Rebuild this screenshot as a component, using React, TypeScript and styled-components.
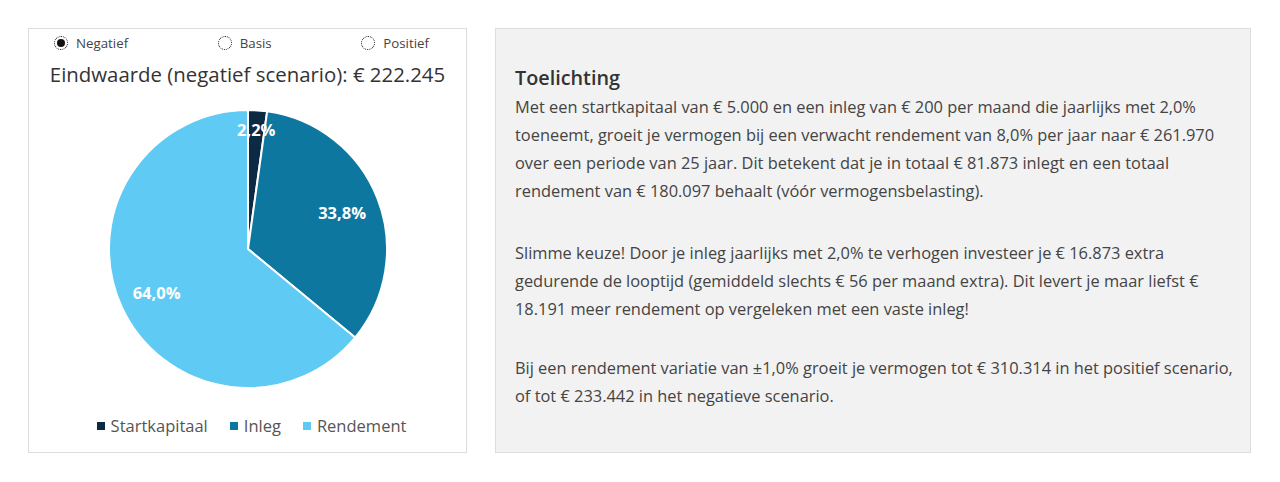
import React from 'react';
import styled, { createGlobalStyle } from 'styled-components';

const GlobalStyle = createGlobalStyle`
  html, body {
    margin: 0;
    padding: 0;
    background: #ffffff;
  }
  body {
    font-family: 'Open Sans', 'Noto Sans', sans-serif;
    color: #333;
  }
`;

type Slice = { label: string; value: number; color: string; labelRadius: number };

const SLICES: Slice[] = [
  { label: 'Startkapitaal', value: 2.2, color: '#0d2a45', labelRadius: 120 },
  { label: 'Inleg', value: 33.8, color: '#0e77a0', labelRadius: 101 },
  { label: 'Rendement', value: 64.0, color: '#5fcaf3', labelRadius: 101 },
];

const SCENARIOS = [
  { id: 'negatief', label: 'Negatief', checked: true },
  { id: 'basis', label: 'Basis', checked: false },
  { id: 'positief', label: 'Positief', checked: false },
];

const R = 139;
const C = 140;

const point = (angle: number, r: number) => {
  const a = (angle - 90) * (Math.PI / 180);
  return [C + r * Math.cos(a), C + r * Math.sin(a)];
};

const formatPct = (v: number) => `${v.toFixed(1).replace('.', ',')}%`;

const PieChart: React.FC = () => {
  let start = 0;
  const arcs = SLICES.map((s) => {
    const sweep = (s.value / 100) * 360;
    const end = start + sweep;
    const [x1, y1] = point(start, R);
    const [x2, y2] = point(end, R);
    const large = sweep > 180 ? 1 : 0;
    const d = `M ${C} ${C} L ${x1} ${y1} A ${R} ${R} 0 ${large} 1 ${x2} ${y2} Z`;
    const [lx, ly] = point(start + sweep / 2, s.labelRadius);
    start = end;
    return { ...s, d, lx, ly };
  });

  return (
    <svg width={280} height={280} viewBox="0 0 280 280">
      {arcs.map((a) => (
        <path key={a.label} d={a.d} fill={a.color} stroke="#fff" strokeWidth={2} strokeLinejoin="round" />
      ))}
      {arcs.map((a) => (
        <text
          key={`${a.label}-t`}
          x={a.lx}
          y={a.ly}
          fill="#fff"
          fontSize={16.5}
          fontWeight={700}
          textAnchor="middle"
          dominantBaseline="central"
          fontFamily="'Open Sans', sans-serif"
        >
          {formatPct(a.value)}
        </text>
      ))}
    </svg>
  );
};

const App: React.FC = () => {
  return (
    <>
      <GlobalStyle />
      <Page>
        <ChartCard>
          <RadioRow>
            {SCENARIOS.map((s) => (
              <RadioLabel key={s.id}>
                <RadioCircle $checked={s.checked} />
                {s.label}
              </RadioLabel>
            ))}
          </RadioRow>
          <ChartTitle>Eindwaarde (negatief scenario): € 222.245</ChartTitle>
          <PieWrap>
            <PieChart />
          </PieWrap>
          <Legend>
            {SLICES.map((s) => (
              <LegendItem key={s.label}>
                <LegendSwatch $color={s.color} />
                {s.label}
              </LegendItem>
            ))}
          </Legend>
        </ChartCard>

        <InfoPanel>
          <InfoTitle>Toelichting</InfoTitle>
          <Paragraph>
            Met een startkapitaal van € 5.000 en een inleg van € 200 per maand die jaarlijks met 2,0%
            <br />
            toeneemt, groeit je vermogen bij een verwacht rendement van 8,0% per jaar naar € 261.970
            <br />
            over een periode van 25 jaar. Dit betekent dat je in totaal € 81.873 inlegt en een totaal
            <br />
            rendement van € 180.097 behaalt (vóór vermogensbelasting).
          </Paragraph>
          <Paragraph $gap={34}>
            Slimme keuze! Door je inleg jaarlijks met 2,0% te verhogen investeer je € 16.873 extra
            <br />
            gedurende de looptijd (gemiddeld slechts € 56 per maand extra). Dit levert je maar liefst €
            <br />
            18.191 meer rendement op vergeleken met een vaste inleg!
          </Paragraph>
          <Paragraph $gap={31}>
            Bij een rendement variatie van ±1,0% groeit je vermogen tot € 310.314 in het positief scenario,
            <br />
            of tot € 233.442 in het negatieve scenario.
          </Paragraph>
        </InfoPanel>
      </Page>
    </>
  );
};

const Page = styled.div`
  display: grid;
  grid-template-columns: 439px 756px;
  gap: 28px;
  padding: 28px;
  align-items: start;
`;

const ChartCard = styled.div`
  box-sizing: border-box;
  height: 425px;
  border: 1px solid #dddddd;
  background: #fff;
  display: flex;
  flex-direction: column;
  align-items: center;
`;

const RadioRow = styled.div`
  box-sizing: border-box;
  width: 100%;
  display: flex;
  justify-content: space-between;
  padding: 6px 37px 0 25px;
  height: 22px;
`;

const RadioLabel = styled.label`
  display: flex;
  align-items: center;
  gap: 8px;
  font-size: 13.3px;
  color: #444;
  line-height: 16px;
`;

const RadioCircle = styled.span<{ $checked: boolean }>`
  box-sizing: border-box;
  width: 14px;
  height: 14px;
  border-radius: 50%;
  border: 1.5px dotted #111;
  display: flex;
  align-items: center;
  justify-content: center;
  &::after {
    content: '';
    width: 8px;
    height: 8px;
    border-radius: 50%;
    background: ${(p) => (p.$checked ? '#111' : 'transparent')};
  }
`;

const ChartTitle = styled.h2`
  margin: 9px 0 0;
  font-size: 20.4px;
  font-weight: 400;
  color: #333;
  line-height: 28px;
`;

const PieWrap = styled.div`
  margin-top: 21px;
  width: 280px;
  height: 280px;
`;

const Legend = styled.div`
  margin: 26px 0 0 8px;
  display: flex;
  gap: 22px;
  font-size: 16.5px;
  color: #555;
  line-height: 22px;
`;

const LegendItem = styled.div`
  display: flex;
  align-items: center;
  gap: 6px;
`;

const LegendSwatch = styled.span<{ $color: string }>`
  width: 8px;
  height: 8px;
  background: ${(p) => p.$color};
`;

const InfoPanel = styled.div`
  box-sizing: border-box;
  height: 425px;
  border: 1px solid #dddddd;
  background: #f2f2f2;
  padding: 36px 10px 0 19px;
  white-space: nowrap;
`;

const InfoTitle = styled.h3`
  margin: 0 0 2px;
  font-size: 19.8px;
  font-weight: 600;
  color: #333;
  line-height: 26px;
`;

const Paragraph = styled.p<{ $gap?: number }>`
  margin: ${(p) => p.$gap ?? 0}px 0 0;
  font-size: 16.4px;
  line-height: 28px;
  color: #444;
`;

export default App;
